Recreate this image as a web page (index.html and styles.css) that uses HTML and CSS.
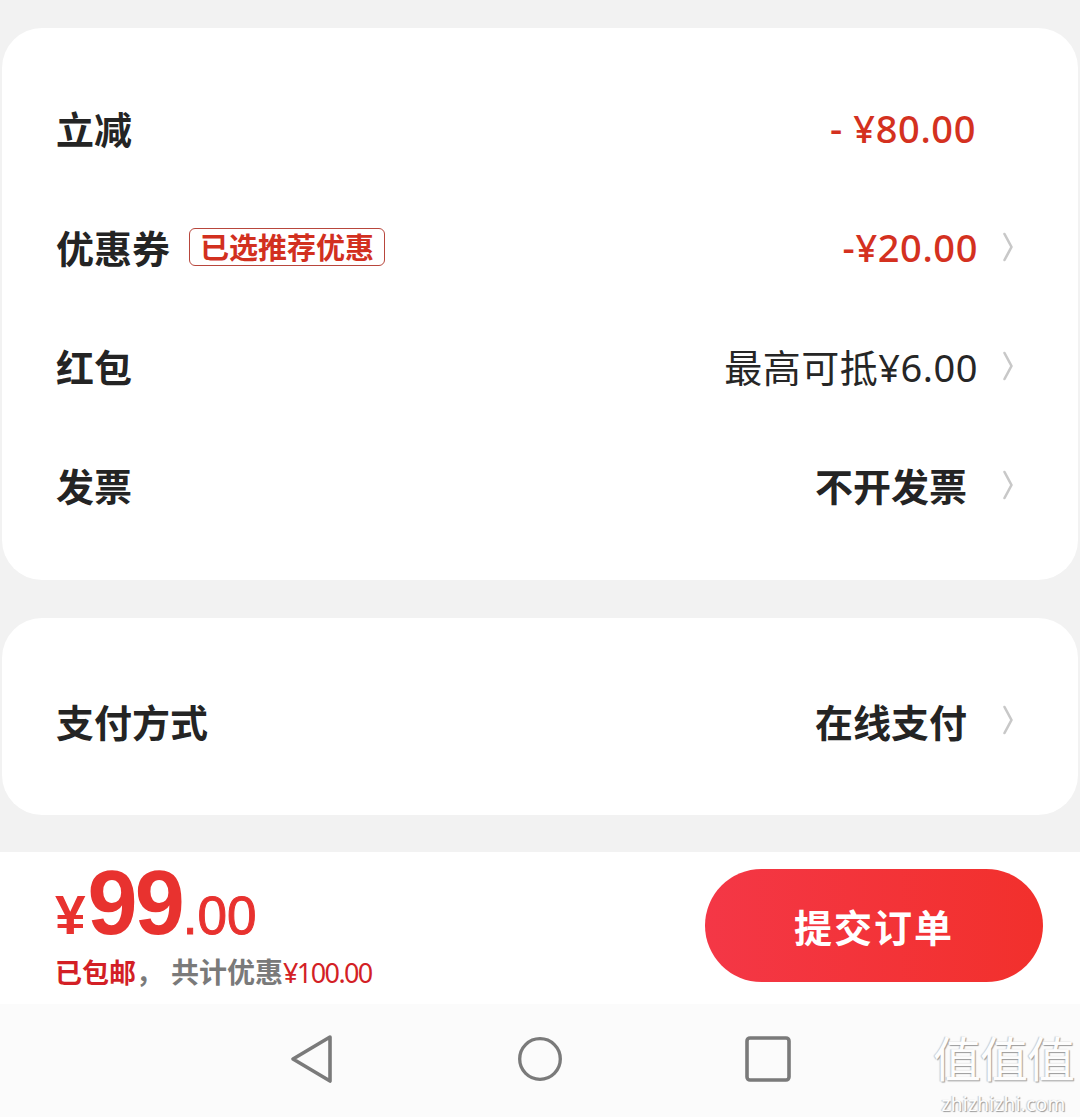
FILE: index.html
```html
<!DOCTYPE html>
<html lang="zh-CN">
<head>
<meta charset="utf-8">
<title>确认订单</title>
<link rel="stylesheet" href="styles.css">
</head>
<body>
<div class="page">
  <section class="card card-main">
    <div class="row">
      <div class="label">立减</div>
      <div class="value red first">-&nbsp;¥80.00</div>
      <span class="chev chev-empty"></span>
    </div>
    <div class="row">
      <div class="label">优惠券<span class="tag">已选推荐优惠</span></div>
      <div class="value red">-¥20.00</div>
      <svg class="chev" viewBox="0 0 12 30"><path d="M2.5 2 L9.5 15 L2.5 28" fill="none" stroke="#c8c8c8" stroke-width="2.6" stroke-linecap="round" stroke-linejoin="round"/></svg>
    </div>
    <div class="row">
      <div class="label">红包</div>
      <div class="value normal">最高可抵¥6.00</div>
      <svg class="chev" viewBox="0 0 12 30"><path d="M2.5 2 L9.5 15 L2.5 28" fill="none" stroke="#c8c8c8" stroke-width="2.6" stroke-linecap="round" stroke-linejoin="round"/></svg>
    </div>
    <div class="row">
      <div class="label">发票</div>
      <div class="value bold">不开发票</div>
      <svg class="chev" viewBox="0 0 12 30"><path d="M2.5 2 L9.5 15 L2.5 28" fill="none" stroke="#c8c8c8" stroke-width="2.6" stroke-linecap="round" stroke-linejoin="round"/></svg>
    </div>
  </section>

  <section class="card card-pay">
    <div class="row">
      <div class="label">支付方式</div>
      <div class="value bold">在线支付</div>
      <svg class="chev" viewBox="0 0 12 30"><path d="M2.5 2 L9.5 15 L2.5 28" fill="none" stroke="#c8c8c8" stroke-width="2.6" stroke-linecap="round" stroke-linejoin="round"/></svg>
    </div>
  </section>

  <footer class="bar">
    <div class="total">
      <div class="price"><span class="yen">¥</span><span class="int">99</span><span class="dec">.00</span></div>
      <div class="note"><span class="ship">已包邮</span><span class="grey">，</span><span class="grey gap">共计优惠</span><span class="save">¥100.00</span></div>
    </div>
    <button class="submit">提交订单</button>
  </footer>

  <nav class="sysnav">
    <svg class="navicon" viewBox="0 0 48 52"><path d="M42 4 L5 26 L42 48 Z" fill="none" stroke="#7a7a7a" stroke-width="3.6" stroke-linejoin="round"/></svg>
    <svg class="navicon" viewBox="0 0 52 52"><circle cx="26" cy="26" r="22" fill="none" stroke="#7a7a7a" stroke-width="3.6"/></svg>
    <svg class="navicon" viewBox="0 0 48 48"><rect x="3" y="3" width="42" height="42" rx="3" fill="none" stroke="#7a7a7a" stroke-width="3.6"/></svg>
    <div class="mark"><span class="mark-big">值值值</span><span class="mark-small">zhizhizhi.com</span></div>
  </nav>
</div>
</body>
</html>
```

FILE: styles.css
```css
* { box-sizing: border-box; margin: 0; padding: 0; }

html, body {
  width: 1080px;
  height: 1117px;
  overflow: hidden;
  background: #f2f2f2;
  font-family: "Noto Sans CJK SC", "Noto Sans", sans-serif;
  color: #222;
}

.page {
  display: flex;
  flex-direction: column;
  height: 1117px;
  padding-top: 28px;
}

.card {
  background: #fff;
  border-radius: 40px;
  margin: 0 2px;
}

.card-main {
  padding: 40px 0 36px;
}

.card-pay {
  margin-top: 38px;
  padding: 43px 0 36px;
}

.row {
  display: flex;
  align-items: center;
  height: 119px;
  padding: 0 64px 0 54px;
}

.card-pay .row { height: 118px; }

.label {
  flex: 1;
  display: flex;
  align-items: center;
  font-size: 38px;
  font-weight: 700;
  color: #242424;
}

.tag {
  margin-left: 19px;
  padding: 0 10px;
  height: 38px;
  line-height: 35px;
  border: 1.5px solid #b8463c;
  border-radius: 6px;
  color: #d2301f;
  font-size: 29px;
  font-weight: 700;
}

.value {
  font-size: 38px;
  font-family: "Noto Sans", "Noto Sans CJK SC", sans-serif;
  margin-right: 24px;
}

.value.red {
  color: #d4311f;
  font-weight: 500;
  letter-spacing: 0.6px;
}

.value.first { margin-right: 26px; }

.value.normal {
  color: #262626;
  font-family: "Noto Sans", "Noto Sans CJK SC", sans-serif;
  font-weight: 400;
  letter-spacing: 0.5px;
}

.value.bold {
  color: #242424;
  font-family: "Noto Sans CJK SC", sans-serif;
  font-weight: 700;
  margin-right: 35px;
}

.chev {
  width: 12px;
  height: 30px;
  flex: none;
}

.chev-empty { display: inline-block; }

.bar {
  margin-top: 37px;
  background: #fff;
  height: 152px;
  display: flex;
  align-items: flex-start;
  justify-content: space-between;
  padding: 7px 37px 0 55px;
}

.total {
  display: flex;
  flex-direction: column;
}

.price {
  color: #e8322f;
  font-family: "Liberation Sans", "Noto Sans", sans-serif;
  font-weight: 700;
  font-size: 88px;
  line-height: 88px;
  height: 88px;
  white-space: nowrap;
}

.yen { font-size: 55px; margin-right: 2px; font-weight: 700; }
.int { font-size: 90px; letter-spacing: -3px; }
.dec { font-size: 53px; font-weight: 400; margin-left: 1px; -webkit-text-stroke: 1px #e8322f; }

.note {
  font-size: 27px;
  font-weight: 700;
  line-height: 36px;
  margin-top: 6px;
  display: flex;
  align-items: baseline;
}

.ship { color: #d31f26; }
.grey { color: #7a7a7a; font-weight: 600; }
.gap { margin-left: 8px; font-size: 28px; }
.save {
  color: #d31f26;
  font-family: "Noto Sans", sans-serif;
  font-size: 27px;
  font-weight: 400;
  letter-spacing: -1.6px;
}

.submit {
  margin-top: 10px;
  width: 338px;
  height: 113px;
  border: none;
  border-radius: 57px;
  background: linear-gradient(90deg, #f43746 0%, #f2302c 100%);
  color: #fff;
  font-family: "Noto Sans CJK SC", sans-serif;
  font-size: 38px;
  font-weight: 700;
  letter-spacing: 2px;
}

.sysnav {
  flex: 1;
  background: #fbfbfb;
  display: flex;
  align-items: center;
  justify-content: center;
  gap: 180px;
  padding-bottom: 4px;
  position: relative;
}

.navicon { width: 48px; height: 52px; }

.mark {
  position: absolute;
  right: 6px;
  top: 17px;
  display: flex;
  flex-direction: column;
  align-items: center;
  color: #fdfdfd;
  text-shadow: 1px 1px 1px #9a9a9a, -1px 0 1px #c8c8c8;
}

.mark-big {
  font-size: 48px;
  line-height: 70px;
  font-weight: 400;
  letter-spacing: -1px;
}

.mark-small {
  font-family: "Noto Sans", sans-serif;
  font-size: 19px;
  line-height: 26px;
  letter-spacing: 0.3px;
}
```
